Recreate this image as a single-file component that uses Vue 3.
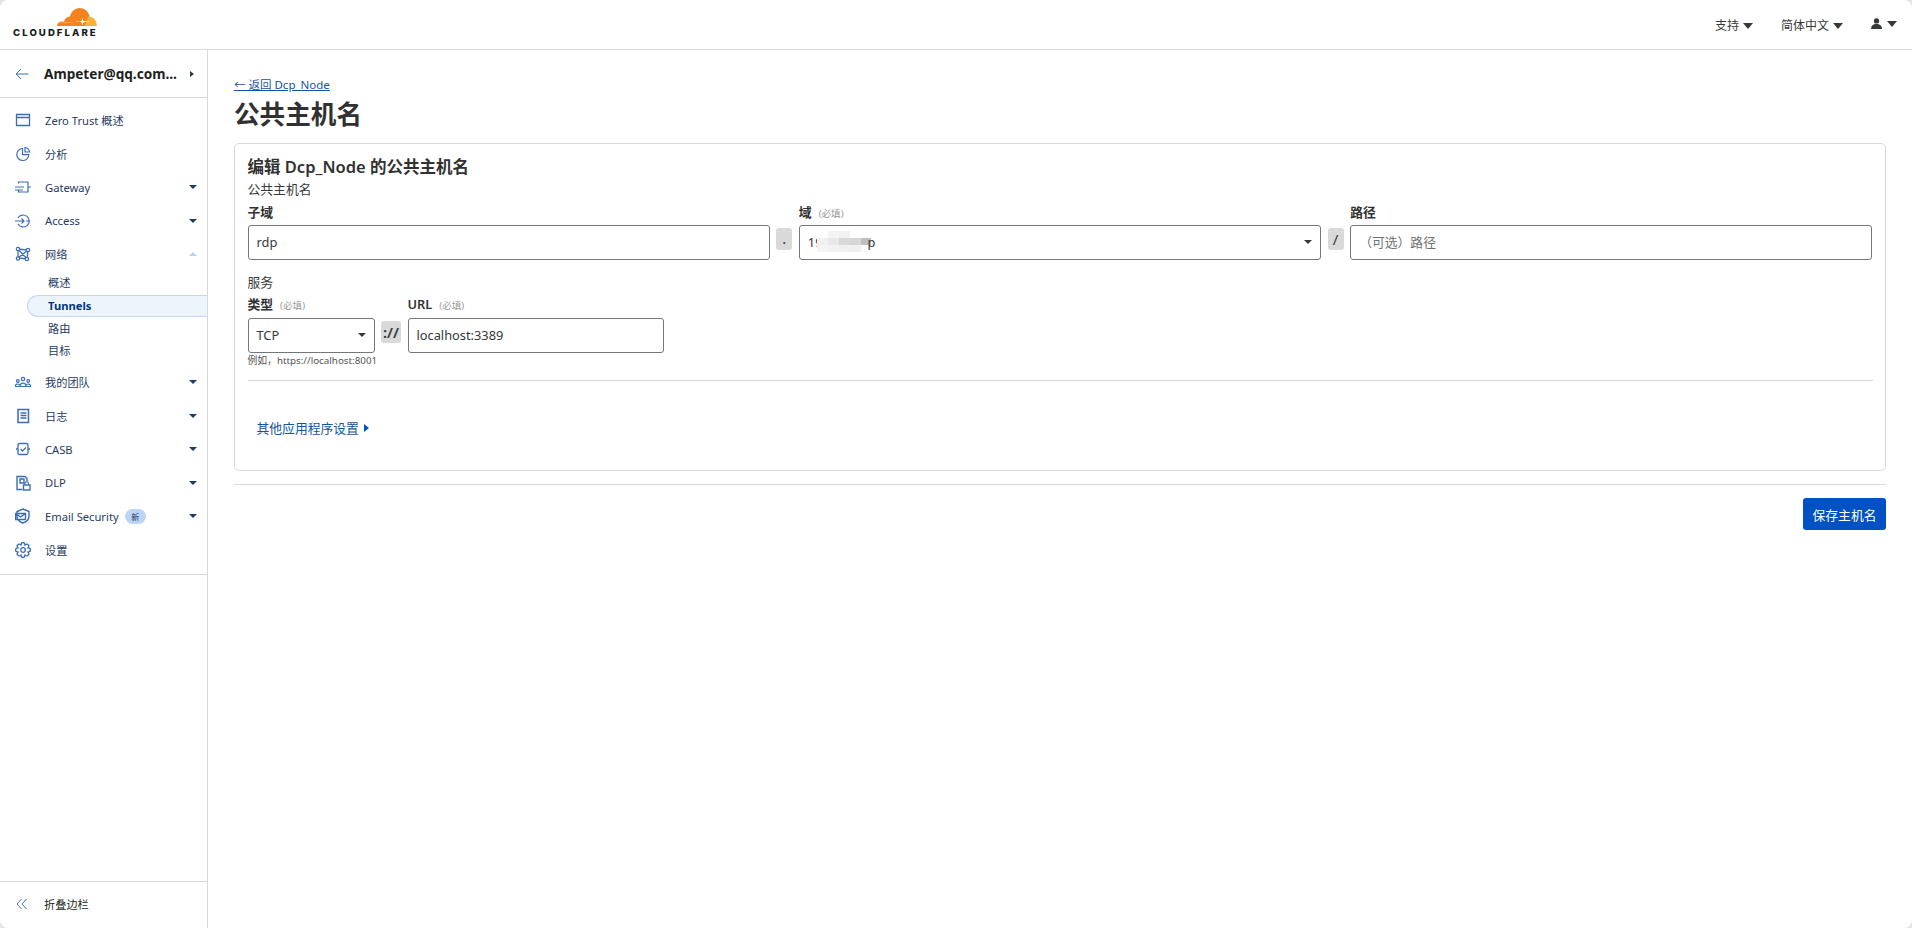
<template>
  <div class="page">
    <!-- 顶栏 -->
    <header class="topbar">
      <a class="logo">
        <svg class="logo-cloud" viewBox="0 0 40 18" width="40" height="18">
          <path fill="#f6821f" d="M0 18c.3-2.600 2-4.400 4.600-4.800.8-.1 1.600 0 2.300.2C8 10.500 10.300 8.700 13 8.600c.9-4.900 5-8.600 9.700-8.600 4.300 0 8 2.800 9.500 7 .4 1.100.6 2.200.6 3.300L30 18z"/>
          <path fill="#fbad41" d="M31 8.500c4.500-.4 8.500 3.400 9 9.500H28z"/>
          <path fill="#fff" d="M0 13.200c6 .6 13 .8 21.500.9l3-1.100.9-3.200.9 3.100 8 .6-8 .7-.9 3.300-.9-3.200-3-.9C14 14.500 7 14.300 1 14z"/>
        </svg>
        <span class="logo-text">CLOUDFLARE</span>
      </a>
      <nav class="top-links">
        <span class="top-link">支持<i class="caret-top"></i></span>
        <span class="top-link">简体中文<i class="caret-top"></i></span>
        <span class="top-link user">
          <svg viewBox="0 0 12 12" width="11" height="11"><circle cx="6" cy="3.200" r="2.900" fill="#36393a"/><path fill="#36393a" d="M0 12c0-3.500 2.500-5.500 6-5.500s6 2 6 5.500z"/></svg>
          <i class="caret-top"></i>
        </span>
      </nav>
    </header>

    <div class="body-row">
      <!-- 侧边栏 -->
      <aside class="sidebar">
        <div class="account">
          <svg class="back-icon" viewBox="0 0 14 12" width="14" height="12"><path d="M13.500 6H1M6 1 1 6l5 5" fill="none" stroke="#3a6db5" stroke-width="1"/></svg>
          <span class="account-name">Ampeter@qq.com...</span>
          <i class="caret-right"></i>
        </div>
        <ul class="nav">
          <template v-for="item in navItems" :key="item.label">
            <li class="nav-item">
              <svg class="nav-icon" viewBox="0 0 16 16" width="16" height="16" v-html="item.icon"></svg>
              <span class="nav-label">{{ item.label }}</span>
              <span v-if="item.badge" class="badge">{{ item.badge }}</span>
              <i v-if="item.caret" class="caret-nav" :class="{ open: item.open }"></i>
            </li>
            <li v-if="item.children" class="sub-list">
              <div
                v-for="child in item.children"
                :key="child"
                class="sub-item"
                :class="{ active: child === 'Tunnels' }"
              >{{ child }}</div>
            </li>
          </template>
        </ul>
        <div class="collapse">
          <svg viewBox="0 0 12 12" width="12" height="12"><path d="M5.500 1 1 6l4.500 5M10.500 1 6 6l4.500 5" fill="none" stroke="#3a6db5" stroke-width="1"/></svg>
          <span>折叠边栏</span>
        </div>
      </aside>

      <!-- 内容 -->
      <main class="main">
        <a class="back-link">← 返回 Dcp_Node</a>
        <h1 class="title">公共主机名</h1>

        <section class="card">
          <h2 class="card-title">编辑 Dcp_Node 的公共主机名</h2>
          <div class="group-label first">公共主机名</div>

          <div class="row">
            <div class="field">
              <label class="label">子域</label>
              <input class="input" value="rdp" />
            </div>
            <span class="sep">.</span>
            <div class="field">
              <label class="label">域<small>(必填)</small></label>
              <div class="input select">
                <span>19</span>
                <span class="mosaic">
                  <i v-for="(c, i) in mosaic" :key="i" :style="{ background: c }"></i>
                </span>
                <span class="tail">p</span>
                <i class="caret-select"></i>
              </div>
            </div>
            <span class="sep slash">/</span>
            <div class="field">
              <label class="label">路径</label>
              <input class="input" placeholder="（可选）路径" />
            </div>
          </div>

          <div class="group-label service">服务</div>
          <div class="row service-row">
            <div class="field type-field">
              <label class="label">类型<small>(必填)</small></label>
              <div class="input select"><span>TCP</span><i class="caret-select"></i></div>
            </div>
            <span class="sep proto">://</span>
            <div class="field url-field">
              <label class="label">URL<small>(必填)</small></label>
              <input class="input" value="localhost:3389" />
            </div>
          </div>
          <div class="hint">例如，https://localhost:8001</div>

          <hr class="divider" />

          <a class="more"><span>其他应用程序设置</span><i class="caret-more"></i></a>
        </section>

        <hr class="footer-line" />
        <div class="actions">
          <button class="save">保存主机名</button>
        </div>
      </main>
    </div>
  </div>
</template>

<script setup>
const line = (w) => `fill="none" stroke="#3a6db5" stroke-width="${w}"`

// 齿轮轮廓：8 个圆齿
const gearPath = () => {
  let d = ''
  for (let i = 0; i < 8; i++) {
    const a0 = ((i - 0.5) * Math.PI) / 4
    const a1 = (i * Math.PI) / 4
    const a2 = ((i + 0.5) * Math.PI) / 4
    const pt = (a, r) => `${(8 + r * Math.cos(a)).toFixed(2)} ${(8 + r * Math.sin(a)).toFixed(2)}`
    d += `${i === 0 ? 'M' + pt(a0, 5.3) : ''}Q${pt(a1 - 0.2, 8.2)} ${pt(a1, 7.2)}Q${pt(a1 + 0.2, 8.2)} ${pt(a2, 5.3)}`
  }
  return d + 'Z'
}

const navItems = [
  { label: 'Zero Trust 概述', icon: `<path ${line(1.3)} d="M1.500 2.500h13v11h-13zM1.500 5.500h13"/>` },
  { label: '分析', icon: `<path ${line(1.2)} d="M7.500 2.500a6 6 0 1 0 6.300 6.200H7.500zM10 1.500a5 5 0 0 1 4.500 4.500H10z"/>` },
  { label: 'Gateway', caret: true, icon: `<path ${line(1.2)} d="M3.500 4.500V3h9.500v10H3.500v-1.500M0 8h9M0 11h8M13 8h3"/>` },
  { label: 'Access', caret: true, icon: `<path ${line(1.2)} d="M3 5a6 6 0 1 1 0 6M0 8h9M6.500 5.500 9 8l-2.500 2.500M11 8h4"/>` },
  {
    label: '网络',
    caret: true,
    open: true,
    icon: `<path ${line(1.3)} d="M3 3l10 1-1 9-9-1zM3 3l9 10M13 4 3 12"/><g fill="#fff" stroke="#3a6db5" stroke-width="1.200"><circle cx="3" cy="3" r="1.700"/><circle cx="13" cy="4" r="1.700"/><circle cx="12" cy="13" r="1.700"/><circle cx="3" cy="12.500" r="1.700"/></g>`,
    children: ['概述', 'Tunnels', '路由', '目标']
  },
  { label: '我的团队', caret: true, icon: `<g ${line(1.2)}><circle cx="2.800" cy="7" r="1.400"/><circle cx="8" cy="5" r="1.700"/><circle cx="13.200" cy="7" r="1.400"/><path d="M.3 12.500a2.500 2.500 0 0 1 5 0zM5 12.500a3 3.400 0 0 1 6 0zM10.700 12.500a2.500 2.500 0 0 1 5 0z"/></g>` },
  { label: '日志', caret: true, icon: `<path ${line(1.5)} d="M3 1.500h10.500v13H3zM5.500 5h6M5.500 7.500h6M5.500 10h6"/>` },
  { label: 'CASB', caret: true, icon: `<path ${line(1.3)} d="M3 4q0-1.500 1.500-1.500h7Q13 2.500 13 4v8q0 1.500-1.500 1.500h-7Q3 13.500 3 12zM5.500 8l2 2 3.500-3.500M1 8h2M13 8h2"/>` },
  { label: 'DLP', caret: true, icon: `<path ${line(1.4)} d="M7.500 14.500H2V1.500h8l2 2v3M5 4h4v4H5z"/><rect x="8.500" y="10" width="6.500" height="5" ${line(1.4)}/><path ${line(1.2)} d="M10 10V8.500a1.700 1.700 0 0 1 3.500 0V10"/>` },
  { label: 'Email Security', badge: '新', caret: true, icon: `<path ${line(1.4)} d="M8 1l6 2.500v5c0 3-3 5.500-6 6.500-3-1-6-3.500-6-6.500v-5zM.5 5.500h10v6H.5zM.5 5.500 5.500 9l5-3.500"/>` },
  { label: '设置', icon: `<path ${line(1.3)} d="${gearPath()}"/><circle cx="8" cy="8" r="2.300" ${line(1.3)}/>` }
]

const mosaic = [
  '#fff', '#f4f4f4', '#f1f1f1', '#fff', '#fff',
  '#f0f0f0', '#e8e8e8', '#d8d8d8', '#d6d6d6', '#bfbfbf',
  '#f4f4f4', '#f2f2f2', '#f0f0f0', '#efefef', '#fafafa'
]
</script>

<style>
html,
body {
  margin: 0;
  background: #e4e4e4;
}
</style>

<style scoped>
.page {
  width: 1912px;
  height: 928px;
  display: flex;
  flex-direction: column;
  background: #fff;
  border-radius: 8px;
  overflow: hidden;
  font-family: "Noto Sans", "Noto Sans CJK SC", sans-serif;
  color: #36393a;
  font-size: 12.8px;
}

.topbar {
  flex: none;
  height: 49px;
  border-bottom: 1px solid #d9d9d9;
  display: flex;
  justify-content: space-between;
  align-items: flex-start;
}

.logo {
  display: flex;
  flex-direction: column;
  align-items: flex-end;
  width: 84px;
  margin: 8px 0 0 13px;
}

.logo-cloud {
  display: block;
}

.logo-text {
  align-self: flex-start;
  font-family: Inter, sans-serif;
  font-weight: 800;
  font-size: 9.6px;
  line-height: 10px;
  letter-spacing: 2.05px;
  color: #1a1a1a;
  margin-top: 2px;
  white-space: nowrap;
}

.top-links {
  display: flex;
  align-items: center;
  margin: 16px 15px 0 0;
  font-size: 12px;
  line-height: 20px;
}

.top-link {
  display: flex;
  align-items: center;
  gap: 4px;
  margin-left: 28px;
}

.top-link.user {
  margin-top: -5px;
  gap: 5px;
}

.caret-top {
  width: 0;
  height: 0;
  border-left: 5.5px solid transparent;
  border-right: 5.5px solid transparent;
  border-top: 6px solid #36393a;
}

.body-row {
  flex: 1;
  display: flex;
  min-height: 0;
}

.sidebar {
  flex: none;
  width: 207px;
  border-right: 1px solid #d9d9d9;
  display: flex;
  flex-direction: column;
}

.account {
  height: 47px;
  flex: none;
  border-bottom: 1px solid #d9d9d9;
  display: flex;
  align-items: center;
  padding: 0 13px 0 15px;
}

.back-icon {
  flex: none;
}

.account-name {
  margin-left: 15px;
  flex: 1;
  font-size: 13.6px;
  font-weight: 700;
  color: #1d1f20;
  white-space: nowrap;
}

.caret-right {
  width: 0;
  height: 0;
  border-top: 3.5px solid transparent;
  border-bottom: 3.5px solid transparent;
  border-left: 4px solid #36393a;
}

.nav {
  list-style: none;
  margin: 0 0 auto;
  flex: none;
  height: 470.5px;
  padding: 5.5px 0 0;
  border-bottom: 1px solid #d9d9d9;
}

.nav-item {
  height: 33.5px;
  display: flex;
  align-items: center;
  padding: 0 10px 0 15px;
  font-size: 11.2px;
  color: #1f3a63;
}

.nav-icon {
  flex: none;
  margin-right: 14px;
}

.nav-label {
  white-space: nowrap;
}

.badge {
  margin-left: 6px;
  width: 21px;
  height: 15px;
  border-radius: 8px;
  background: #bcd4f5;
  font-size: 8px;
  line-height: 15px;
  text-align: center;
  color: #1f3a63;
}

.caret-nav {
  margin-left: auto;
  width: 0;
  height: 0;
  border-left: 4px solid transparent;
  border-right: 4px solid transparent;
  border-top: 4.5px solid #1f3a63;
}

.caret-nav.open {
  border-top: 0;
  border-bottom: 4.5px solid #c3cddb;
}

.sub-list {
  margin-top: 0.5px;
  margin-bottom: 4px;
  padding-left: 27px;
}

.sub-item {
  height: 22px;
  line-height: 22px;
  padding-left: 21px;
  font-size: 11.2px;
  color: #1f3a63;
}

.sub-item.active {
  line-height: 20px;
  margin: 1px 0;
  box-sizing: border-box;
  background: #eef4fc;
  border: 1px solid #c3d6f0;
  border-right: 0;
  border-radius: 12px 0 0 12px;
  padding-left: 20px;
  font-weight: 700;
  color: #003681;
}

.collapse {
  flex: none;
  height: 47px;
  padding: 0 0 2px 16px;
  box-sizing: border-box;
  border-top: 1px solid #d9d9d9;
  display: flex;
  align-items: center;
  font-size: 11.2px;
  color: #1d1f20;
}

.collapse span {
  margin-left: 16px;
}

.main {
  flex: 1;
  min-width: 0;
  padding: 28px 26px 0;
}

.back-link {
  display: block;
  font-size: 11.5px;
  line-height: 14px;
  color: #14539f;
  text-decoration: underline;
}

.title {
  margin: 6px 0 11px;
  font-size: 25.6px;
  line-height: 34px;
  font-weight: 700;
  color: #313131;
}

.card {
  height: 328px;
  box-sizing: border-box;
  border: 1px solid #d9d9d9;
  border-radius: 5px;
  padding: 11px 12.5px 0;
}

.card-title {
  margin: 0;
  font-size: 16.5px;
  line-height: 24px;
  font-weight: 600;
  color: #313131;
}

.group-label {
  line-height: 18px;
}

.group-label.first {
  margin-top: 1px;
}

.group-label.service {
  margin-top: 13px;
}

.row {
  display: flex;
  gap: 6.5px;
  margin-top: 5px;
}

.service-row {
  margin-top: 4px;
}

.field {
  flex: 1;
  min-width: 0;
}

.type-field {
  flex: none;
  width: 127px;
}

.url-field {
  flex: none;
  width: 256px;
}

.label {
  display: block;
  height: 18px;
  margin-bottom: 4px;
  line-height: 18px;
  font-weight: 600;
  color: #313131;
}

.service-row .label {
  margin-bottom: 5px;
}

.label small {
  margin-left: 7px;
  font-size: 9.6px;
  font-weight: 400;
  color: #9a9a9a;
}

.input {
  display: block;
  width: 100%;
  height: 35px;
  box-sizing: border-box;
  border: 1px solid #72777a;
  border-radius: 3px;
  padding: 0 8px 2px;
  background: #fff;
  font: inherit;
  font-size: 12.8px;
  color: #36393a;
  outline: none;
}

.input::placeholder {
  color: #6f6f6f;
}

.select {
  display: flex;
  align-items: center;
}

.caret-select {
  margin-left: auto;
  width: 0;
  height: 0;
  border-left: 4px solid transparent;
  border-right: 4px solid transparent;
  border-top: 4.5px solid #36393a;
}

.mosaic {
  display: grid;
  grid-template-columns: repeat(5, 10.8px);
  grid-auto-rows: 7px;
  margin-left: -5px;
}

.tail {
  margin-left: -4px;
}

.sep {
  flex: none;
  align-self: flex-end;
  width: 16px;
  height: 22px;
  margin-bottom: 10px;
  border-radius: 3px;
  background: #d9d9d9;
  text-align: center;
  line-height: 22px;
  font-weight: 600;
  color: #36393a;
}

.sep.slash {
  font-size: 15px;
  font-weight: 400;
}

.sep.proto {
  width: 20px;
  font-size: 15px;
}

.hint {
  margin-top: 1px;
  font-size: 9.8px;
  line-height: 14px;
  color: #555;
}

.divider {
  margin: 12px 0 0;
  border: 0;
  border-top: 1px solid #d9d9d9;
}

.more {
  display: flex;
  align-items: center;
  margin: 38px 0 0 9px;
  line-height: 18px;
  color: #14539f;
}

.caret-more {
  margin-left: 5px;
  width: 0;
  height: 0;
  border-top: 4.5px solid transparent;
  border-bottom: 4.5px solid transparent;
  border-left: 5px solid #0051c3;
}

.footer-line {
  margin: 13px 0 0;
  border: 0;
  border-top: 1px solid #d9d9d9;
}

.actions {
  display: flex;
  justify-content: flex-end;
  margin-top: 13px;
}

.save {
  width: 83px;
  height: 32px;
  border: 0;
  border-radius: 3px;
  background: #0051c3;
  color: #fff;
  font: inherit;
  font-size: 12.8px;
}
</style>
